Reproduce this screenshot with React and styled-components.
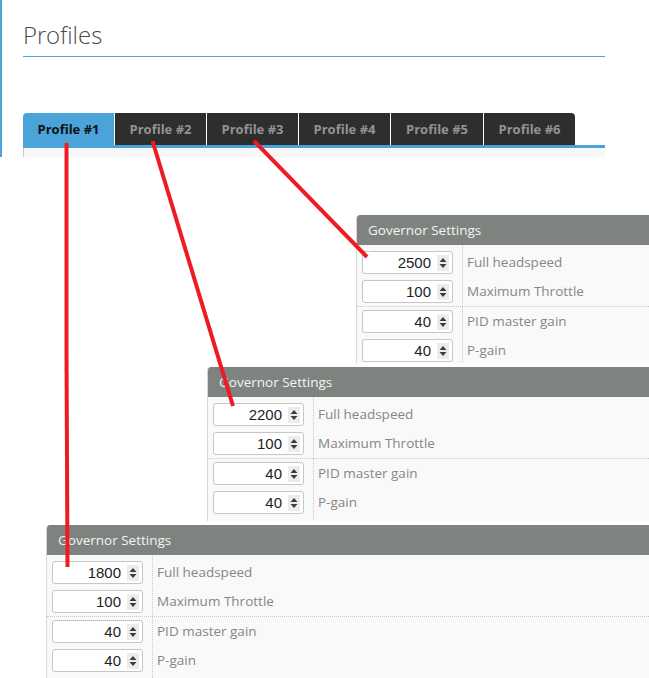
import React from "react";
import styled, { createGlobalStyle } from "styled-components";

const GlobalStyle = createGlobalStyle`
  html, body { margin: 0; padding: 0; background: #fff; }
  body { font-family: "Open Sans", "Liberation Sans", sans-serif; }
`;

const BLUE = "#4aa3d9";

const Root = styled.div`
  position: relative;
  width: 649px;
  height: 678px;
  overflow: hidden;
  display: flex;
  flex-direction: column;
  background: #fff;
`;

const TopSection = styled.section`
  box-sizing: border-box;
  height: 157px;
  border-left: 2px solid ${BLUE};
  padding: 19px 44px 0 21px;
  display: flex;
  flex-direction: column;
`;

const Title = styled.h2`
  margin: 0;
  font-family: "Open Sans Light", "Open Sans", sans-serif;
  font-size: 24px;
  font-weight: 300;
  line-height: 32px;
  color: #4a4a4a;
  padding-bottom: 5px;
  border-bottom: 1px solid ${BLUE};
`;

const TabBar = styled.div`
  margin-top: 56px;
  display: flex;
  gap: 1px;
  height: 32px;
  border-bottom: 3px solid ${BLUE};
`;

const Tab = styled.div`
  width: ${(p) => p.$w}px;
  display: flex;
  align-items: center;
  justify-content: center;
  font-size: 13px;
  font-weight: 700;
  background: ${(p) => (p.$active ? BLUE : "#2e2e2e")};
  color: ${(p) => (p.$active ? "#111" : "#939393")};
  &:first-child { border-top-left-radius: 4px; }
  &:last-child { border-top-right-radius: 4px; }
`;

const TabContent = styled.div`
  flex: 1;
  background: #f7f7f7;
  border-left: 1px solid #c9c9c9;
`;

const Canvas = styled.div`
  position: relative;
  flex: 1;
`;

const Snippet = styled.div`
  position: absolute;
  left: ${(p) => p.$left}px;
  top: ${(p) => p.$top}px;
  right: 0;
  height: ${(p) => p.$height}px;
  box-sizing: border-box;
  padding: 4px 0 0 5px;
  background: #fff;
  overflow: hidden;
`;

const Panel = styled.div`
  height: 100%;
  background: #f9f9f9;
  border-left: 1px solid #d6d6d6;
  border-top-left-radius: 4px;
  overflow: hidden;
`;

const PanelHeader = styled.div`
  height: 30px;
  line-height: 30px;
  padding-left: 11px;
  background: #7e8380;
  color: #f4f4f4;
  font-size: 13.5px;
`;

const Group = styled.div`
  display: flex;
  border-bottom: ${(p) => (p.$divider ? "1px dotted #c8c8c8" : "none")};
`;

const FieldColumn = styled.div`
  box-sizing: border-box;
  width: 106px;
  display: flex;
  flex-direction: column;
  gap: 6px;
  padding: ${(p) => p.$pad};
  padding-left: 5px;
  border-right: 1px dotted #c8c8c8;
`;

const LabelColumn = styled.div`
  display: flex;
  flex-direction: column;
  gap: 6px;
  padding: ${(p) => p.$pad};
  padding-left: 4px;
`;

const Label = styled.div`
  height: 23px;
  line-height: 23px;
  font-size: 13.5px;
  color: #868686;
  white-space: nowrap;
`;

const NumberBox = styled.div`
  box-sizing: border-box;
  width: 91px;
  height: 23px;
  background: #fff;
  border: 1px solid #c6c6c6;
  border-radius: 3px;
  display: flex;
  align-items: center;
  justify-content: flex-end;
  padding-right: 3px;
`;

const Value = styled.span`
  font-family: "Liberation Sans", Arial, sans-serif;
  font-size: 15px;
  color: #1e1e1e;
  margin-right: 6px;
`;

const Spinner = styled.div`
  width: 12px;
  height: 16px;
  background: #ececec;
  display: flex;
  align-items: center;
  justify-content: center;
`;

const Overlay = styled.svg`
  position: absolute;
  left: 0;
  top: 0;
  width: 649px;
  height: 678px;
  pointer-events: none;
`;

function NumberInput({ value }) {
  return (
    <NumberBox>
      <Value>{value}</Value>
      <Spinner>
        <svg width="12" height="16" viewBox="0 0 12 16">
          <polygon points="2.5,7 6,3 9.5,7" fill="#3c3c3c" />
          <polygon points="2.5,9 6,13 9.5,9" fill="#3c3c3c" />
        </svg>
      </Spinner>
    </NumberBox>
  );
}

function GovernorPanel({ left, top, height, headspeed }) {
  const groups = [
    { pad: "6px 0 3px", rows: [[headspeed, "Full headspeed"], ["100", "Maximum Throttle"]], divider: true },
    { pad: "3px 0 6px", rows: [["40", "PID master gain"], ["40", "P-gain"]], divider: false },
  ];
  return (
    <Snippet $left={left} $top={top} $height={height}>
      <Panel>
        <PanelHeader>Governor Settings</PanelHeader>
        {groups.map((g, i) => (
          <Group key={i} $divider={g.divider}>
            <FieldColumn $pad={g.pad}>
              {g.rows.map(([v], j) => (
                <NumberInput key={j} value={v} />
              ))}
            </FieldColumn>
            <LabelColumn $pad={g.pad}>
              {g.rows.map(([, l], j) => (
                <Label key={j}>{l}</Label>
              ))}
            </LabelColumn>
          </Group>
        ))}
      </Panel>
    </Snippet>
  );
}

const tabs = [
  { name: "Profile #1", w: 91 },
  { name: "Profile #2", w: 91 },
  { name: "Profile #3", w: 91 },
  { name: "Profile #4", w: 91 },
  { name: "Profile #5", w: 92 },
  { name: "Profile #6", w: 91 },
];

export default function App() {
  return (
    <>
      <GlobalStyle />
      <Root>
        <TopSection>
          <Title>Profiles</Title>
          <TabBar>
            {tabs.map((t, i) => (
              <Tab key={t.name} $w={t.w} $active={i === 0}>
                {t.name}
              </Tab>
            ))}
          </TabBar>
          <TabContent />
        </TopSection>
        <Canvas>
          <GovernorPanel left={351} top={54} height={200} headspeed="2500" />
          <GovernorPanel left={202} top={206} height={158} headspeed="2200" />
          <GovernorPanel left={41} top={364} height={170} headspeed="1800" />
        </Canvas>
        <Overlay viewBox="0 0 649 678">
          <g stroke="#ed1c24" strokeWidth="4" fill="none">
            <line x1="66.5" y1="143" x2="66.5" y2="353" />
            <line x1="66.5" y1="353" x2="67.5" y2="567" />
            <line x1="152.5" y1="141" x2="233" y2="406" />
            <line x1="254" y1="141" x2="367" y2="257" />
          </g>
        </Overlay>
      </Root>
    </>
  );
}
